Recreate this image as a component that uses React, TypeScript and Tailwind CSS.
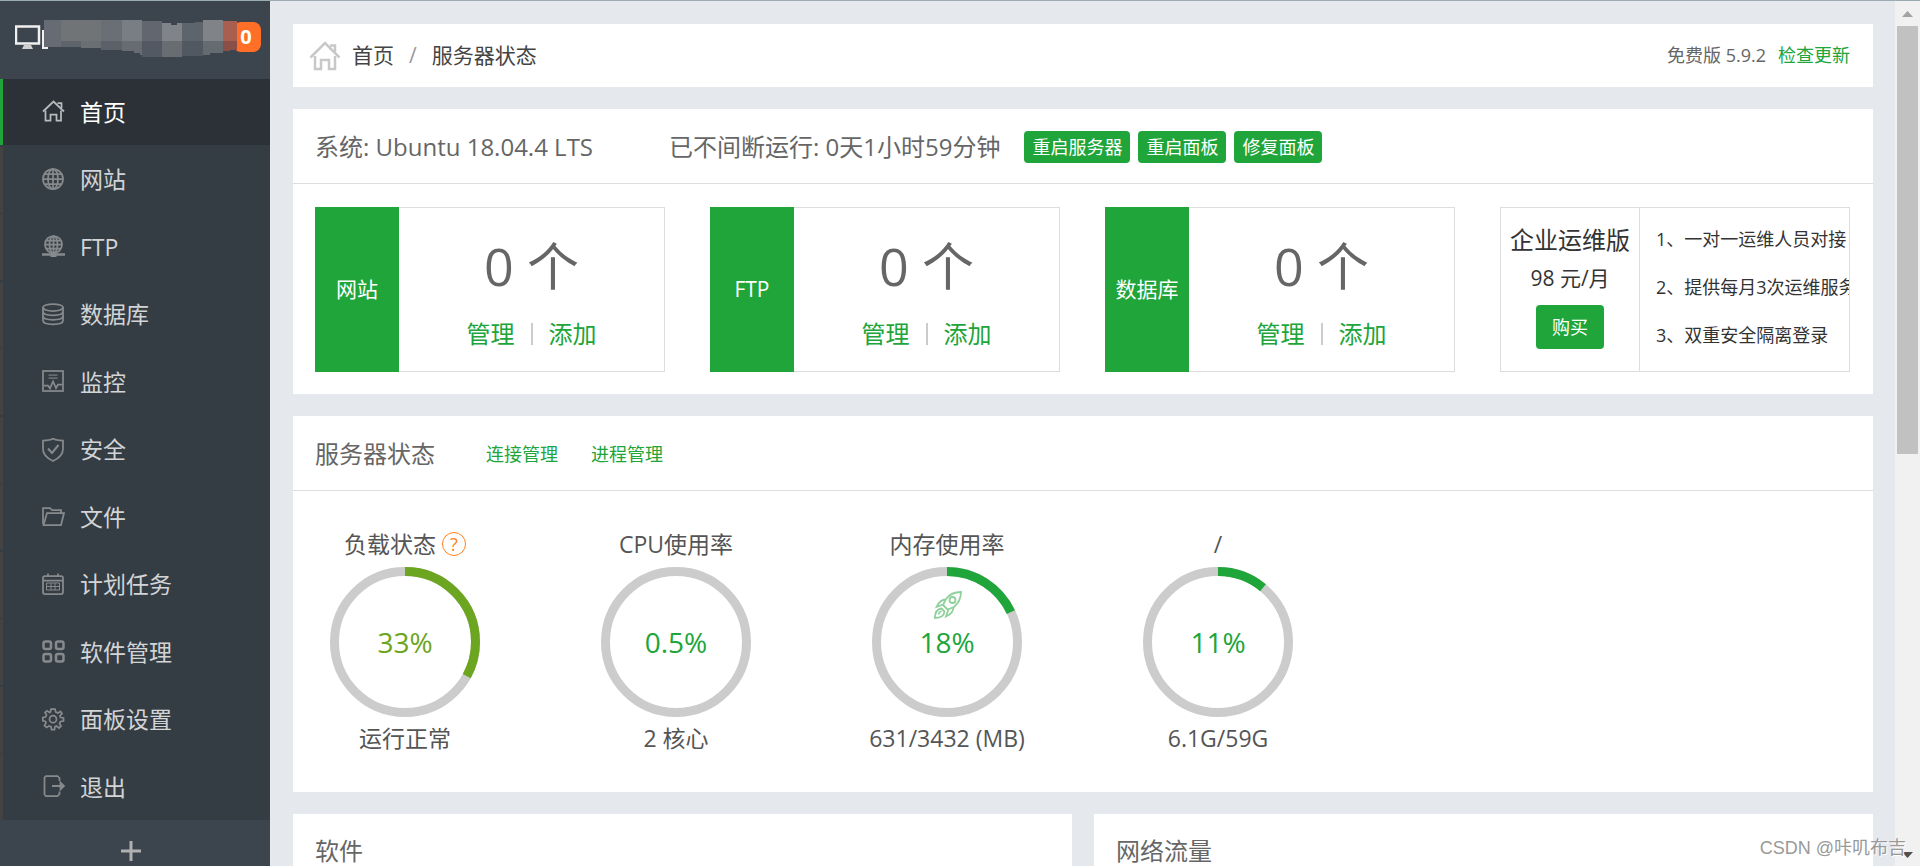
import type { ReactNode } from 'react';

type MenuItem = { label: string; icon: ReactNode; active?: boolean };

const menu: MenuItem[] = [
  {
    label: '首页',
    active: true,
    icon: (
      <>
        <path d="M1 11.5 11.5 1.5 22 11.5" />
        <path d="M3.5 10.5V20.5H8.5V14.5H14.5V20.5H19V10.5" />
        <path d="M15.5 3H19.5V8" />
      </>
    ),
  },
  {
    label: '网站',
    icon: (
      <>
        <circle cx="11" cy="11" r="10" />
        <ellipse cx="11" cy="11" rx="5" ry="10" />
        <path d="M11 1V21M1 11H21M3 6H19M3 16H19" />
      </>
    ),
  },
  {
    label: 'FTP',
    icon: (
      <>
        <circle cx="11.5" cy="9.5" r="8.5" />
        <ellipse cx="11.5" cy="9.5" rx="4" ry="8.5" />
        <path d="M11.5 1V18M3 9.5H20M4.5 5.5H18.5M4.5 13.5H18.5" />
        <path d="M0 19.5H23" strokeWidth="2.5" />
        <path d="M8.5 20H14.5" strokeWidth="4" />
      </>
    ),
  },
  {
    label: '数据库',
    icon: (
      <>
        <ellipse cx="11" cy="4.5" rx="10" ry="3.5" />
        <path d="M1 4.5V17.5C1 22.5 21 22.5 21 17.5V4.5" />
        <path d="M1 8.5C1 13.5 21 13.5 21 8.5M1 13C1 18 21 18 21 13" />
      </>
    ),
  },
  {
    label: '监控',
    icon: (
      <>
        <rect x="1" y="1" width="20" height="20" />
        <path d="M6.5 5H15.5M6.5 8H15.5" opacity=".6" />
        <path d="M2 15.5H6L8 18.5L11 11.5L14 18L16 14.5H20.5" />
      </>
    ),
  },
  {
    label: '安全',
    icon: (
      <>
        <path d="M11 0.5C8 2.5 4.5 2.5 1 2.5V11C1 17 5.5 20.5 11 23C16.5 20.5 21 17 21 11V2.5C17.5 2.5 14 2.5 11 0.5Z" />
        <path d="M6 10.5 10 15 16.5 7" strokeWidth="2" />
      </>
    ),
  },
  {
    label: '文件',
    icon: (
      <>
        <path d="M1 19V3H8L10 5H19V8" />
        <path d="M5 8H22L19 20H1.5L5 8Z" />
      </>
    ),
  },
  {
    label: '计划任务',
    icon: (
      <>
        <rect x="1" y="3" width="20" height="18" rx="2" />
        <path d="M1 7.5H21M6 0.5V4M16 0.5V4" />
        <path d="M4.5 10H17.5M4.5 13.5H17.5M4.5 17H17.5M4.5 10V17M9 10V17M13 10V17M17.5 10V17" strokeWidth="1" />
      </>
    ),
  },
  {
    label: '软件管理',
    icon: (
      <g strokeWidth="2.5">
        <rect x="1.5" y="1.5" width="7.5" height="7.5" rx="2" />
        <rect x="14" y="1.5" width="7.5" height="7.5" rx="2" />
        <rect x="1.5" y="14" width="7.5" height="7.5" rx="2" />
        <rect x="14" y="14" width="7.5" height="7.5" rx="2" />
      </g>
    ),
  },
  {
    label: '面板设置',
    icon: (
      <>
        <path d="M9 1H13L13.8 4L16 5L18.5 3.5L20 5.5L18 8L18.5 9.5L21.5 10V13L18.5 13.5L17.5 15.5L19 18L17 20L14.5 18L13 18.7L12.5 21.5H9.5L9 18.7L7 18L4.5 19.5L2.5 17.5L4 15L3.5 13.5L0.8 12.8V9.5L3.5 9L4.5 7L3 4.5L5 2.8L7.5 4.5L8.5 4Z" />
        <circle cx="11" cy="11.2" r="3.5" />
      </>
    ),
  },
  {
    label: '退出',
    icon: (
      <>
        <path d="M17.5 6V3L15.5 1H4L2.5 2.5V19.5L4 21H15.5L17.5 19V16.5" />
        <path d="M10 11H20" strokeWidth="2" />
        <path d="M18.5 7.5 22 11 18.5 14.5Z" fill="currentColor" />
      </>
    ),
  },
];

const counters = ['网站', 'FTP', '数据库'];

const services = ['1、一对一运维人员对接', '2、提供每月3次运维服务', '3、双重安全隔离登录'];

type GaugeData = {
  title: string;
  percent: number;
  footer: string;
  color: string;
  help?: boolean;
  rocket?: boolean;
};

const gauges: GaugeData[] = [
  { title: '负载状态', percent: 33, footer: '运行正常', color: '#6ca520', help: true },
  { title: 'CPU使用率', percent: 0.5, footer: '2 核心', color: '#20a53a' },
  { title: '内存使用率', percent: 18, footer: '631/3432 (MB)', color: '#20a53a', rocket: true },
  { title: '/', percent: 11, footer: '6.1G/59G', color: '#20a53a' },
];

function Rocket() {
  return (
    <svg
      className="absolute left-[62px] top-6 h-7 w-7 text-[#20a53a] opacity-50"
      viewBox="0 0 28 28"
      fill="none"
      stroke="currentColor"
      strokeWidth="1.8"
    >
      <path d="M27 1C20 1 15 4 12 8L9 14L13.5 18.5L20 16C24 12.500 27 8 27 1Z" />
      <circle cx="18.500" cy="9" r="3" />
      <path d="M12 8.500C7 8.500 4.500 11.500 2.500 16L9 13.500" />
      <path d="M19.500 16C19.500 20.500 16.500 23.500 12 25.500L14.500 18.500" />
      <path d="M1 27C1 22 3 18 7.500 17.500L10.500 20.500C10 25 6 27 1 27Z" />
      <path d="M4.500 23.500C5 21.500 6 20.500 7.500 20" />
    </svg>
  );
}

function Gauge({ title, percent, footer, color, help, rocket }: GaugeData) {
  const radius = 70.5;
  const length = 2 * Math.PI * radius;
  const filled = percent < 1 ? 0 : (length * percent) / 100;

  return (
    <div className="flex w-[150px] flex-col items-center whitespace-nowrap text-[23px] leading-[34px] text-[#555]">
      <div className="flex items-center gap-[6px]">
        <span>{title}</span>
        {help && (
          <a
            href="#help"
            className="flex h-6 w-6 items-center justify-center rounded-full border border-[#ff7f1a] text-[18px] leading-none text-[#ff7f1a]"
          >
            ?
          </a>
        )}
      </div>
      <div className="relative mt-[6px] h-[150px] w-[150px]">
        <svg className="h-full w-full -rotate-90" viewBox="0 0 150 150" fill="none" strokeWidth="9">
          <circle cx="75" cy="75" r={radius} stroke="#ccc" />
          {filled > 0 && (
            <circle cx="75" cy="75" r={radius} stroke={color} strokeDasharray={`${filled} ${length}`} />
          )}
        </svg>
        {rocket && <Rocket />}
        <span className="absolute inset-0 flex items-center justify-center text-[28px]" style={{ color }}>
          {percent}%
        </span>
      </div>
      <div className="mt-1">{footer}</div>
    </div>
  );
}

function Sidebar() {
  return (
    <aside className="flex w-[270px] shrink-0 flex-col bg-[#353d44] text-[23px]">
      <div className="flex h-[78px] items-start bg-[#3c444d] pl-[15px] pt-4">
        <svg className="relative z-10 h-10 w-[222px]" viewBox="15 17 222 40" fill="none">
          <rect x="16" y="26.500" width="23" height="17" stroke="#f0f0f0" strokeWidth="2.500" />
          <path d="M24 45H31L33 49H22Z" fill="#d0d0d0" />
          <path d="M47 31H43V48H48" stroke="#f0f0f0" strokeWidth="2" />
          {/* blurred server address */}
          <path d="M44 20H61V47H44Z" fill="#676c74" />
          <path d="M61 20H101V41H61Z" fill="#717476" />
          <path d="M61 41H81V47H61Z" fill="#5f646b" />
          <path d="M81 41H101V48H81Z" fill="#6a6f73" />
          <path d="M101 20H122V41H101Z" fill="#6a6f75" />
          <path d="M101 41H122V50H101Z" fill="#5b6069" />
          <path d="M122 20H142V41H122Z" fill="#797d84" />
          <path d="M122 41H142V55H140V53H134V51H122Z" fill="#676c72" />
          <path d="M142 21H162V41H142Z" fill="#61666f" />
          <path d="M142 41H162V57H142Z" fill="#535963" />
          <path d="M162 23H171V25H177V23H182V41H162Z" fill="#808387" />
          <path d="M162 41H182V57H162Z" fill="#696d71" />
          <path d="M182 23H195V22H203V41H182Z" fill="#5e646c" />
          <path d="M182 41H203V56H182Z" fill="#525862" />
          <path d="M203 20H223V41H203Z" fill="#808488" />
          <path d="M203 41H223V53H210V55H203Z" fill="#656c71" />
          <path d="M223 21H237V41H223Z" fill="#a85f50" />
          <path d="M223 41H237V50H230V51H223Z" fill="#8a5048" />
        </svg>
        <span className="-ml-1 mt-[5px] flex h-[30px] w-7 items-center justify-center rounded-lg bg-[#ff6f27] pr-0.5 text-[20px] font-bold text-white">
          0
        </span>
      </div>
      <nav className="flex grow flex-col justify-between">
        {menu.map((item) => (
          <a
            key={item.label}
            href={`#${item.label}`}
            className={
              item.active
                ? 'flex h-[66px] items-center gap-[14px] border-l-[3px] border-[#20a53a] bg-[#2c3037] pl-[39px] text-white'
                : 'flex h-[66px] items-center gap-[14px] border-l-[3px] border-[#434343] pl-[39px] text-[#d2d4d6]'
            }
          >
            <svg
              className={item.active ? 'h-6 w-6 text-[#b8babc]' : 'h-6 w-6 text-[#868a8c]'}
              viewBox="0 0 24 24"
              fill="none"
              stroke="currentColor"
              strokeWidth="1.75"
            >
              {item.icon}
            </svg>
            <span>{item.label}</span>
          </a>
        ))}
      </nav>
      <button type="button" aria-label="添加菜单" className="flex h-[46px] items-center justify-center bg-[#3c444d] pr-2 pt-4">
        <svg className="h-5 w-5 text-[#b0b0b0]" viewBox="0 0 20 20" stroke="currentColor" strokeWidth="3">
          <path d="M10 0V20M0 10H20" />
        </svg>
      </button>
    </aside>
  );
}

function CounterCard({ label }: { label: string }) {
  return (
    <div className="flex h-[165px] border border-l-0 border-[#ddd]">
      <div className="-my-px flex w-[84px] shrink-0 items-center justify-center bg-[#20a53a] text-[21px] text-white">
        {label}
      </div>
      <div className="flex grow flex-col items-center">
        <div className="mt-[18px] text-[52px] leading-[80px] text-[#666]">0 个</div>
        <div className="mt-[10px] flex items-center gap-4 text-[24px] leading-9">
          <a href="#manage" className="text-[#20a53a]">管理</a>
          <span className="h-[22px] w-0.5 bg-[#ccc]" />
          <a href="#add" className="text-[#20a53a]">添加</a>
        </div>
      </div>
    </div>
  );
}

function ActionButton({ children }: { children: ReactNode }) {
  return (
    <button type="button" className="h-8 rounded bg-[#20a53a] px-2 text-[18px] leading-8 text-white">
      {children}
    </button>
  );
}

export default function App() {
  return (
    <div className="flex h-screen flex-col overflow-hidden border-t border-[#9aacb2] bg-[#e5e8ed] font-['Open_Sans','Noto_Sans_CJK_SC',sans-serif]">
      <div className="flex min-h-0 grow">
        <Sidebar />

        <main className="flex min-w-0 grow flex-col gap-[22px] overflow-hidden pl-[23px] pr-[22px] pt-[23px]">
          {/* Breadcrumb */}
          <div className="flex h-[63px] shrink-0 items-center bg-white pl-4 pr-[23px]">
            <svg className="h-8 w-8 text-[#c8c8c8]" viewBox="0 0 32 32" fill="none" stroke="currentColor" strokeWidth="2.5">
              <path d="M1.500 17.500 16 3 30.500 17.500" />
              <path d="M6 16V29H12V20H20V29H26V16" />
              <path d="M21 5.500H26V12" />
            </svg>
            <div className="ml-[11px] flex items-center gap-[15px] text-[21px] text-[#444]">
              <a href="#home">首页</a>
              <span className="text-[#999]">/</span>
              <span>服务器状态</span>
            </div>
            <div className="ml-auto flex gap-3 text-[18px] text-[#666]">
              <span>免费版 5.9.2</span>
              <a href="#update" className="text-[#20a53a]">检查更新</a>
            </div>
          </div>

          {/* System info */}
          <section className="shrink-0 bg-white">
            <header className="flex h-[75px] items-center border-b border-[#ddd] px-[22px] pt-0.5 text-[24px] text-[#666]">
              <span>系统: Ubuntu 18.04.4 LTS</span>
              <span className="ml-[76px]">已不间断运行: 0天1小时59分钟</span>
              <div className="ml-6 flex gap-2">
                <ActionButton>重启服务器</ActionButton>
                <ActionButton>重启面板</ActionButton>
                <ActionButton>修复面板</ActionButton>
              </div>
            </header>
            <div className="grid grid-cols-4 gap-[45px] pb-[22px] pl-[22px] pr-[23px] pt-[23px]">
              {counters.map((label) => (
                <CounterCard key={label} label={label} />
              ))}
              <div className="flex h-[165px] overflow-hidden border border-[#ddd] text-[#333]">
                <div className="flex w-[139px] shrink-0 flex-col items-center border-r border-[#ddd] pt-[14px]">
                  <div className="whitespace-nowrap text-[24px] leading-9">企业运维版</div>
                  <div className="mt-1 text-[21px] leading-8">98 元/月</div>
                  <button type="button" className="mt-[11px] h-11 rounded bg-[#20a53a] px-4 text-[18px] text-white">
                    购买
                  </button>
                </div>
                <ul className="min-w-0 whitespace-nowrap pl-4 pt-[7px] text-[18px] leading-[48px]">
                  {services.map((service) => (
                    <li key={service}>{service}</li>
                  ))}
                </ul>
              </div>
            </div>
          </section>

          {/* Server status */}
          <section className="shrink-0 bg-white">
            <header className="flex h-[75px] items-center border-b border-[#ddd] px-[22px] pt-0.5 text-[#666]">
              <h3 className="text-[24px]">服务器状态</h3>
              <div className="ml-[51px] flex gap-[33px] text-[18px] text-[#20a53a]">
                <a href="#connections">连接管理</a>
                <a href="#processes">进程管理</a>
              </div>
            </header>
            <div className="flex gap-[121px] pb-[37px] pl-[37px] pt-9">
              {gauges.map((gauge) => (
                <Gauge key={gauge.title} {...gauge} />
              ))}
            </div>
          </section>

          {/* Software and network */}
          <div className="grid shrink-0 grid-cols-2 gap-[22px]">
            {['软件', '网络流量'].map((title) => (
              <section key={title} className="h-[400px] bg-white">
                <header className="flex h-[75px] items-center border-b border-[#ddd] px-[22px] text-[24px] text-[#666]">
                  <h3>{title}</h3>
                </header>
              </section>
            ))}
          </div>
        </main>

        {/* Scrollbar */}
        <div className="flex w-[25px] shrink-0 flex-col items-center bg-[#f1f1f1]">
          <svg className="h-[25px] w-[25px]" viewBox="0 0 25 25">
            <path d="M7 16 12.500 10 18 16Z" fill="#a3a3a3" />
          </svg>
          <div className="h-[428px] w-[21px] bg-[#c1c1c1]" />
          <svg className="mt-auto h-[25px] w-[25px]" viewBox="0 0 25 25">
            <path d="M7 11 12.500 17 18 11Z" fill="#505050" />
          </svg>
        </div>
      </div>

      <div className="absolute bottom-1 right-[14px] font-['Liberation_Sans','Noto_Sans_CJK_SC',sans-serif] text-[18px] leading-7 text-[#999] [text-shadow:1px_1px_0_#fff]">
        CSDN @咔叽布吉
      </div>
    </div>
  );
}
